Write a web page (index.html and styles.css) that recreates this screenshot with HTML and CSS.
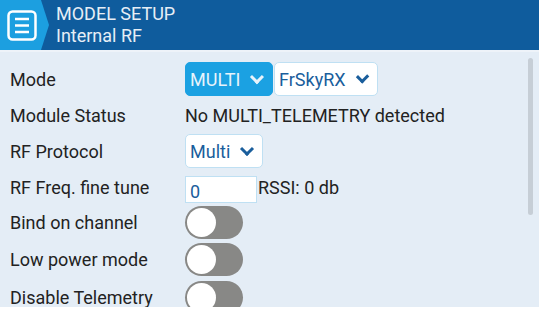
FILE: index.html
```html
<!DOCTYPE html>
<html lang="en">
<head>
  <meta charset="UTF-8">
  <title>Model Setup - Internal RF</title>
  <link rel="stylesheet" href="styles.css">
</head>
<body>

  <div class="header">
    <div class="menu-btn">
      <svg width="30" height="31" viewBox="0 0 30 31">
        <rect x="1.5" y="1.5" width="27" height="28" rx="4" fill="none" stroke="#fff" stroke-width="2.5"/>
        <line x1="8" y1="9" x2="22" y2="9" stroke="#fff" stroke-width="2.5"/>
        <line x1="8" y1="15.5" x2="22" y2="15.5" stroke="#fff" stroke-width="2.5"/>
        <line x1="8" y1="22" x2="22" y2="22" stroke="#fff" stroke-width="2.5"/>
      </svg>
    </div>
    <div class="title">
      <div>MODEL SETUP</div>
      <div>Internal RF</div>
    </div>
  </div>

  <div class="content">
    <div class="form">
      <div class="row">
        <div class="label">Mode</div>
        <div class="field">
          <div class="select active">MULTI <span class="chev"></span></div>
          <div class="select wide">FrSkyRX <span class="chev"></span></div>
        </div>
      </div>
      <div class="row">
        <div class="label">Module Status</div>
        <div class="field">No MULTI_TELEMETRY detected</div>
      </div>
      <div class="row">
        <div class="label">RF Protocol</div>
        <div class="field">
          <div class="select">Multi <span class="chev"></span></div>
        </div>
      </div>
      <div class="row">
        <div class="label">RF Freq. fine tune</div>
        <div class="field">
          <div class="num">0</div>
          <span>RSSI: 0 db</span>
        </div>
      </div>
      <div class="row tall first">
        <div class="label">Bind on channel</div>
        <div class="field"><div class="toggle"></div></div>
      </div>
      <div class="row tall">
        <div class="label">Low power mode</div>
        <div class="field"><div class="toggle"></div></div>
      </div>
      <div class="row tall">
        <div class="label">Disable Telemetry</div>
        <div class="field"><div class="toggle"></div></div>
      </div>
    </div>
    <div class="scrollbar"></div>
  </div>

  <div class="footer"></div>

</body>
</html>
```

FILE: styles.css
```css
body {
  margin: 0;
  width: 539px;
  height: 313px;
  overflow: hidden;
  font-family: Roboto, "Liberation Sans", sans-serif;
  font-size: 18px;
  color: #222;
  background: #e4edf6;
  display: flex;
  flex-direction: column;
}

.header {
  height: 50px;
  flex: none;
  display: flex;
  align-items: center;
  background: #0f5c9d;
  color: #e6eef6;
}

.menu-btn {
  width: 49px;
  height: 50px;
  background: #1c9fe0;
  clip-path: polygon(0 0, 41px 0, 49px 25px, 41px 50px, 0 50px);
  display: flex;
  align-items: center;
  padding-left: 7px;
  box-sizing: border-box;
}

.title {
  padding-left: 7px;
  line-height: 22px;
  margin-top: -1px;
}

.content {
  flex: 1;
  display: flex;
  border-top: 2px solid #eef3f9;
  overflow: hidden;
}

.form {
  flex: 1;
  padding: 9px 0 0 10px;
}

.row {
  display: flex;
  align-items: center;
  height: 36px;
}

.row.tall {
  height: 38px;
}

.row.tall.first {
  height: 35px;
}

.label {
  width: 175px;
  flex: none;
}

.field {
  display: flex;
  align-items: center;
}

.select {
  height: 34px;
  box-sizing: border-box;
  display: flex;
  align-items: center;
  padding: 0 6px 0 4px;
  gap: 12px;
  background: #fff;
  border: 1px solid #bfe0f3;
  border-radius: 5px;
  color: #1a5e9c;
}

.select.active {
  background: #1ba1e2;
  border-color: #1ba1e2;
  color: #e8f3fb;
  width: 88px;
}

.select.wide {
  width: 104px;
  margin-left: 1px;
  padding-left: 4px;
}

.chev {
  width: 7px;
  height: 7px;
  border-right: 3px solid currentColor;
  border-bottom: 3px solid currentColor;
  transform: rotate(45deg);
  margin-top: -5px;
  margin-left: auto;
  margin-right: 4px;
}

.num {
  width: 72px;
  height: 27px;
  box-sizing: border-box;
  background: #fff;
  border: 1px solid #bfe0f3;
  color: #1a5e9c;
  padding: 4px 0 0 4px;
  margin-right: 1px;
  margin-top: 4px;
}

.toggle {
  width: 58px;
  height: 33px;
  border-radius: 17px;
  background: #888886;
  position: relative;
}

.toggle::after {
  content: "";
  position: absolute;
  left: 2px;
  top: 2px;
  width: 29px;
  height: 29px;
  border-radius: 50%;
  background: #fff;
}

.scrollbar {
  width: 5px;
  height: 157px;
  margin: 6px 6px 0 0;
  border-radius: 3px;
  background: #c6ced6;
}

.footer {
  height: 6px;
  flex: none;
  background: #fff;
}
```
